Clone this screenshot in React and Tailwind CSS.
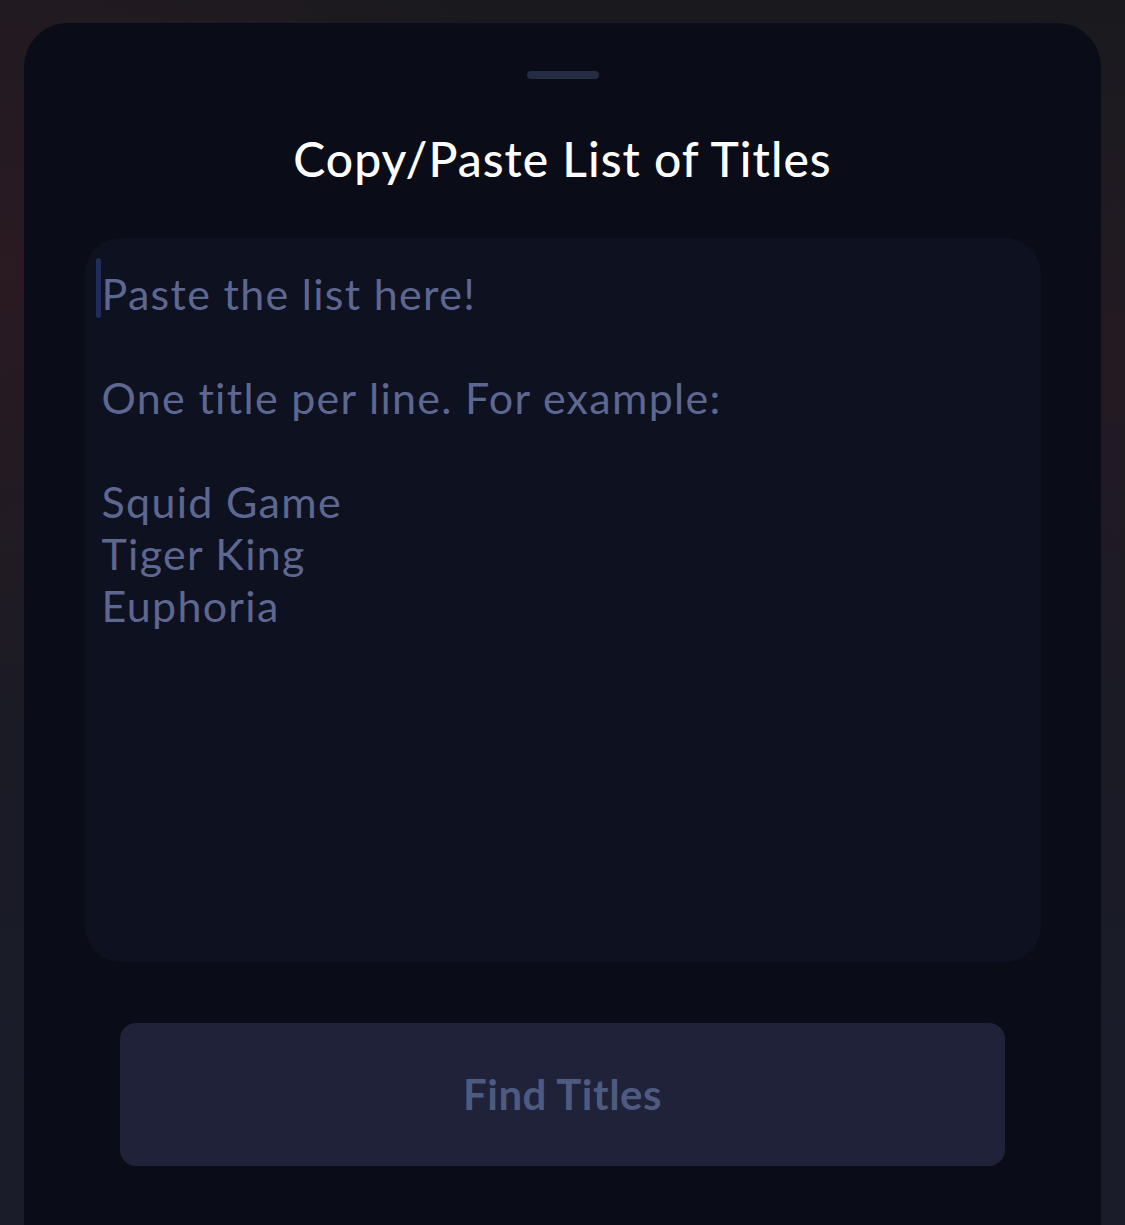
const lines = [
  'Paste the list here!',
  '',
  'One title per line. For example:',
  '',
  'Squid Game',
  'Tiger King',
  'Euphoria',
];

export default function App() {
  return (
    <div className="w-[1125px] h-[1225px] overflow-hidden bg-[#19191e] bg-[radial-gradient(ellipse_at_0%_22%,#2a1a22_0%,transparent_35%),radial-gradient(ellipse_at_100%_30%,#241a22_0%,transparent_30%),linear-gradient(to_bottom,#1a1a1e,#1a1c2a)] pt-[23px] px-[24px] font-['Lato','Open_Sans',sans-serif]">
      <div className="h-[1240px] w-[1077px] rounded-t-[44px] bg-[#0a0c17] flex flex-col items-center">
        {/* drag handle */}
        <div className="mt-[48px] h-[8px] w-[72px] rounded-full bg-[#272c45]" />

        <h1 className="mt-[50px] text-[48px] leading-[60px] font-medium text-white tracking-[1px]">
          Copy/Paste List of Titles
        </h1>

        <div className="mt-[49px] w-[956px] h-[724px] rounded-[36px] bg-[#0e1120] pt-[20px] pl-[11px] flex">
          <div className="w-[5px] h-[60px] rounded-full bg-[#1f2c5c] shrink-0" />
          <div className="pl-[1px] pt-[10px] text-[43px] leading-[52px] font-normal text-[#5d6790] tracking-[1.3px]">
            {lines.map((l, i) => (
              <div key={i} className="h-[52px] whitespace-pre">{l}</div>
            ))}
          </div>
        </div>

        <button className="mt-[61px] w-[885px] h-[143px] rounded-[16px] bg-[#1f2238] text-[42px] font-bold text-[#4f5a80] tracking-[0.5px]">
          Find Titles
        </button>
      </div>
    </div>
  );
}
